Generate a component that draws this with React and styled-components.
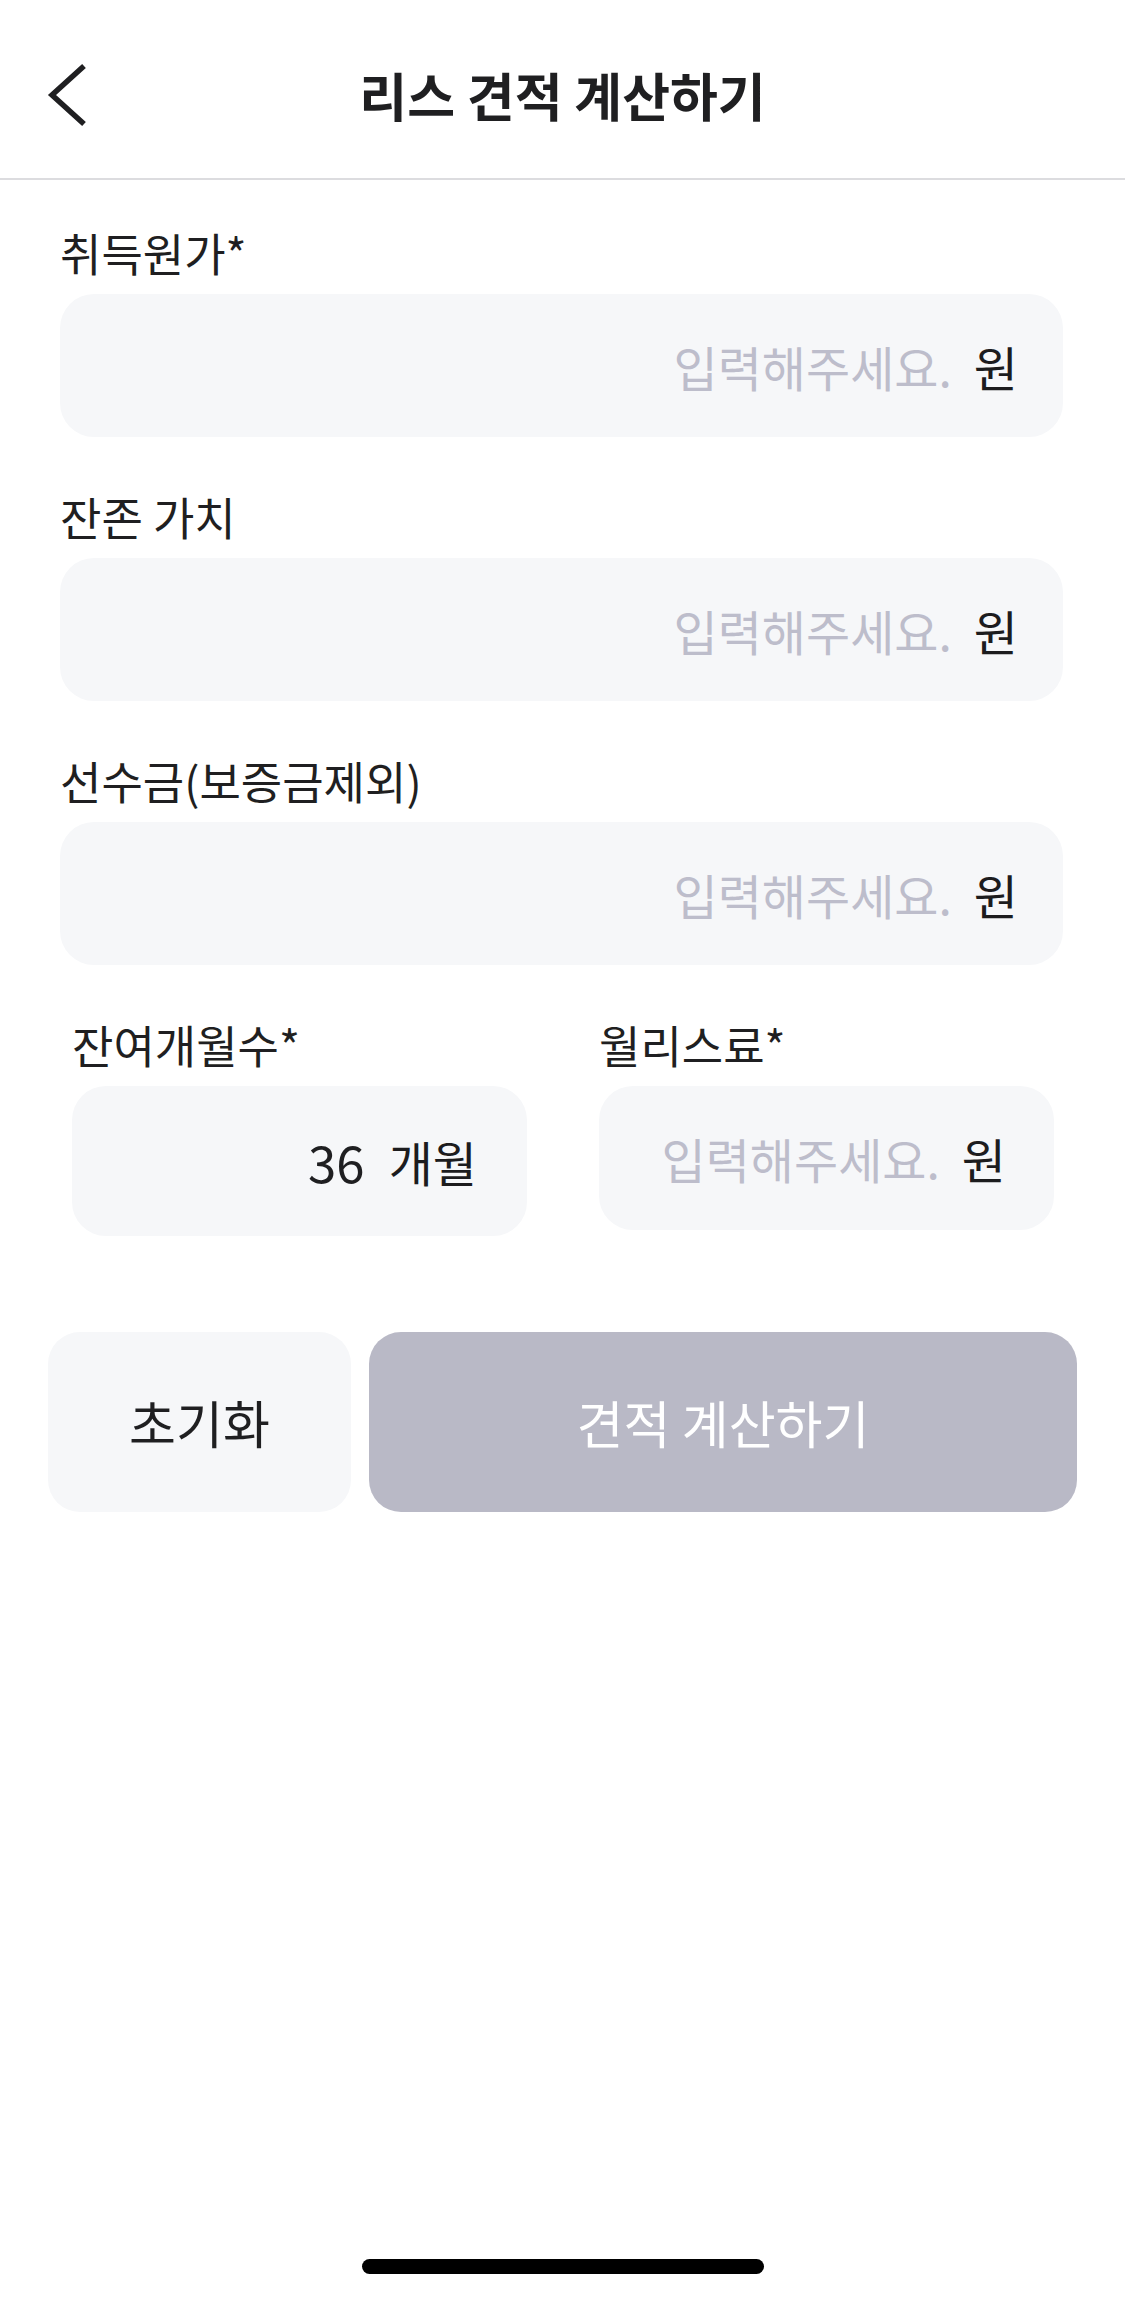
import React from "react";
import styled, { createGlobalStyle } from "styled-components";

const GlobalStyle = createGlobalStyle`
  html, body {
    margin: 0;
    padding: 0;
    background: #ffffff;
  }
  body {
    font-family: "Noto Sans CJK KR", "Noto Sans", sans-serif;
    color: #1c1c1e;
  }
  * {
    box-sizing: border-box;
  }
`;

const Page = styled.div`
  width: 1125px;
  min-height: 2298px;
  display: flex;
  flex-direction: column;
  background: #fff;
`;

const Header = styled.header`
  height: 180px;
  padding-top: 12px;
  border-bottom: 2px solid #dcdcdf;
  display: grid;
  grid-template-columns: 1fr auto 1fr;
  align-items: center;
`;

const BackButton = styled.button`
  justify-self: start;
  margin-left: 40px;
  width: 52px;
  height: 72px;
  padding: 0;
  border: none;
  background: transparent;
  display: flex;
  align-items: center;
  justify-content: center;
  cursor: pointer;
`;

const Title = styled.h1`
  margin: 0;
  font-size: 52px;
  font-weight: 700;
  line-height: 1;
  color: #1f1f21;
`;

const Form = styled.div`
  padding: 44px 62px 0 60px;
  display: flex;
  flex-direction: column;
  gap: 51px;
`;

const Field = styled.div`
  display: flex;
  flex-direction: column;
  gap: 12px;
`;

const Label = styled.label`
  font-size: 45px;
  line-height: 58px;
  color: #1f1f21;
`;

const InputBox = styled.div`
  height: ${(p) => p.$height || 143}px;
  border-radius: 34px;
  background: #f6f7f9;
  display: flex;
  align-items: center;
  justify-content: flex-end;
  padding-right: ${(p) => p.$padRight || 45}px;
  font-size: 48px;
  line-height: 1;
`;

const Placeholder = styled.span`
  color: #bdbdcb;
`;

const Value = styled.span`
  color: #1f1f21;
  font-size: 51px;
`;

const Unit = styled.span`
  color: #1c1c1e;
  margin-left: ${(p) => p.$gap || 22}px;
`;

const Row = styled.div`
  display: grid;
  grid-template-columns: 455px 455px;
  column-gap: 72px;
  padding: 0 72px;
  margin-top: 51px;
  align-items: start;
`;

const Buttons = styled.div`
  display: flex;
  gap: 18px;
  padding: 0 48px;
  margin-top: 96px;
`;

const Button = styled.button`
  height: 180px;
  border: none;
  border-radius: 32px;
  font-family: inherit;
  font-size: 51px;
  font-weight: 400;
  cursor: pointer;
  flex: ${(p) => (p.$primary ? "1" : "0 0 303px")};
  background: ${(p) => (p.$primary ? "#b9b9c6" : "#f6f7f9")};
  color: ${(p) => (p.$primary ? "#ffffff" : "#1f1f21")};
`;

const HomeIndicator = styled.div`
  margin: auto auto 24px;
  width: 402px;
  height: 15px;
  border-radius: 8px;
  background: #000;
`;

function Chevron() {
  return (
    <svg width="44" height="66" viewBox="0 0 44 66">
      <polyline
        points="40,4 8,33 40,62"
        fill="none"
        stroke="#1f1f21"
        strokeWidth="5.5"
      />
    </svg>
  );
}

function MoneyField({ label }) {
  return (
    <Field>
      <Label>{label}</Label>
      <InputBox>
        <Placeholder>입력해주세요.</Placeholder>
        <Unit>원</Unit>
      </InputBox>
    </Field>
  );
}

export default function App() {
  return (
    <Page>
      <GlobalStyle />
      <Header>
        <BackButton aria-label="뒤로">
          <Chevron />
        </BackButton>
        <Title>리스 견적 계산하기</Title>
        <div />
      </Header>

      <Form>
        <MoneyField label="취득원가*" />
        <MoneyField label="잔존 가치" />
        <MoneyField label="선수금(보증금제외)" />
      </Form>

      <Row>
        <Field>
          <Label>잔여개월수*</Label>
          <InputBox $height={150} $padRight={50}>
            <Value>36</Value>
            <Unit $gap={24}>개월</Unit>
          </InputBox>
        </Field>
        <Field>
          <Label>월리스료*</Label>
          <InputBox $height={144} $padRight={48}>
            <Placeholder>입력해주세요.</Placeholder>
            <Unit>원</Unit>
          </InputBox>
        </Field>
      </Row>

      <Buttons>
        <Button>초기화</Button>
        <Button $primary>견적 계산하기</Button>
      </Buttons>

      <HomeIndicator />
    </Page>
  );
}
